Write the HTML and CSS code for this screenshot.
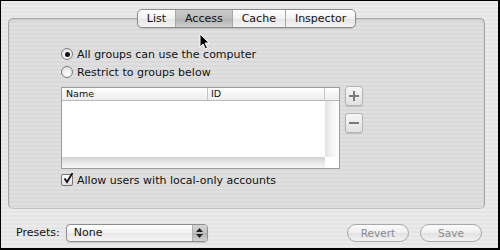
FILE: index.html
```html
<!DOCTYPE html>
<html lang="en">
<head>
    <meta charset="UTF-8">
    <title>Access</title>
    <link rel="stylesheet" href="styles.css">
</head>
<body>
    <div class="window">
        <div class="pane">
            <div class="tabs">
                <span class="tab">List</span>
                <span class="tab is-selected">Access</span>
                <span class="tab">Cache</span>
                <span class="tab">Inspector</span>
            </div>
            <div class="group">
                <label class="option"><span class="radio is-on"></span>All groups can use the computer</label>
                <label class="option"><span class="radio"></span>Restrict to groups below</label>
                <div class="list-row">
                    <div class="table">
                        <div class="table-head">
                            <span class="col-name">Name</span>
                            <span class="col-id">ID</span>
                            <span class="col-corner"></span>
                        </div>
                        <div class="table-body">
                            <div class="rows"></div>
                            <div class="vscroll"></div>
                        </div>
                        <div class="table-foot">
                            <div class="hscroll"></div>
                            <div class="corner"></div>
                        </div>
                    </div>
                    <div class="list-buttons">
                        <button class="square-btn">
                            <svg width="10" height="10" viewBox="0 0 10 10"><path d="M5 0v10M0 5h10" stroke="#7a7a7a" stroke-width="2"/></svg>
                        </button>
                        <button class="square-btn">
                            <svg width="10" height="10" viewBox="0 0 10 10"><path d="M0 5h10" stroke="#7a7a7a" stroke-width="2"/></svg>
                        </button>
                    </div>
                </div>
                <label class="option check-option">
                    <span class="checkbox">
                        <svg width="12" height="12" viewBox="0 0 12 12"><path d="M2.5 5.5l2.5 3.5 5.5-9" fill="none" stroke="#111" stroke-width="1.8"/></svg>
                    </span>Allow users with local-only accounts
                </label>
            </div>
        </div>

        <div class="bottom-bar">
            <span class="presets-label">Presets:</span>
            <div class="popup">
                <span class="popup-value">None</span>
                <span class="popup-arrows">
                    <svg width="7" height="10" viewBox="0 0 7 10"><path d="M3.5 0L7 4H0z M0 6h7L3.5 10z" fill="#222"/></svg>
                </span>
            </div>
            <div class="spacer"></div>
            <button class="pill-btn">Revert</button>
            <button class="pill-btn">Save</button>
        </div>

        <svg class="cursor" width="12" height="17" viewBox="0 0 12 17">
            <path d="M1 1v13l3-3 2.5 5 2-1-2.5-5h4.2z" fill="#000" stroke="#fff" stroke-width="1"/>
        </svg>
    </div>
</body>
</html>
```

FILE: styles.css
```css
/* Base */
* {
    margin: 0;
    padding: 0;
    box-sizing: border-box;
}

body {
    background: #000;
    font-family: 'DejaVu Sans', sans-serif;
    font-size: 11px;
    color: #111;
    width: 500px;
    height: 250px;
    overflow: hidden;
}

/* Window with aqua pinstripes */
.window {
    position: relative;
    margin: 1px 2px 2px 1px;
    width: 497px;
    height: 247px;
    padding: 8px 13px 0 7px;
    background: repeating-linear-gradient(to bottom, #ebebeb 0, #ebebeb 2px, #e4e4e4 2px, #e4e4e4 4px);
}

.pane {
    display: flex;
    flex-direction: column;
    align-items: center;
}

/* Segmented tabs */
.tabs {
    position: relative;
    z-index: 1;
    display: flex;
    height: 19px;
    margin-bottom: -10px;
    border: 1px solid #8c8c8c;
    border-radius: 5px;
    background: linear-gradient(to bottom, #ffffff, #f1f1f1 50%, #e4e4e4 51%, #f4f4f4);
    box-shadow: 0 1px 1px rgba(0, 0, 0, 0.15);
    overflow: hidden;
}

.tab {
    display: flex;
    align-items: center;
    padding: 0 9px;
    border-left: 1px solid #a8a8a8;
    line-height: 1;
}

.tab:first-child {
    border-left: none;
}

.tab.is-selected {
    background: linear-gradient(to bottom, #c9c9c9, #bdbdbd 50%, #aeaeae 51%, #cfcfcf);
}

/* Group box */
.group {
    width: 477px;
    height: 191px;
    border: 1px solid #a6a6a6;
    border-bottom-color: #c4c4c4;
    border-radius: 5px;
    padding: 26px 0 0 52px;
    background: repeating-linear-gradient(to bottom, #e0e0e0 0, #e0e0e0 2px, #d9d9d9 2px, #d9d9d9 4px);
    box-shadow: inset 0 1px 2px rgba(0, 0, 0, 0.12);
}

.option {
    display: flex;
    align-items: center;
    height: 18px;
    gap: 4px;
}

.radio {
    width: 12px;
    height: 12px;
    border-radius: 50%;
    border: 1px solid #7e7e7e;
    background: radial-gradient(circle at 50% 70%, #ffffff, #e6e6e6 70%, #cfcfcf);
    display: flex;
    align-items: center;
    justify-content: center;
}

.radio.is-on::after {
    content: "";
    width: 5px;
    height: 5px;
    border-radius: 50%;
    background: #111;
}

.checkbox {
    width: 12px;
    height: 12px;
    border: 1px solid #777;
    border-radius: 2px;
    background: linear-gradient(to bottom, #ffffff, #e0e0e0);
    display: flex;
    align-items: center;
    justify-content: center;
}

.checkbox svg {
    flex: none;
    margin-top: -2px;
    margin-left: 1px;
}

.check-option {
    margin-top: 2px;
}

/* Table */
.list-row {
    display: flex;
    gap: 5px;
    margin-top: 6px;
}

.table {
    width: 279px;
    height: 82px;
    border: 1px solid #9c9c9c;
    background: #fff;
    display: flex;
    flex-direction: column;
}

.table-head {
    display: flex;
    height: 13px;
    border-bottom: 1px solid #b8b8b8;
    background: linear-gradient(to bottom, #ffffff, #ececec);
    font-size: 9.5px;
    line-height: 12px;
}

.col-name {
    width: 146px;
    padding-left: 4px;
    border-right: 1px solid #c4c4c4;
}

.col-id {
    flex: 1;
    padding-left: 3px;
    border-right: 1px solid #c4c4c4;
}

.col-corner {
    width: 14px;
}

.table-body {
    flex: 1;
    display: flex;
}

.rows {
    flex: 1;
}

.vscroll {
    width: 14px;
    background: linear-gradient(to right, #e2e2e2, #f4f4f4 50%, #ffffff);
}

.table-foot {
    display: flex;
    height: 11px;
}

.hscroll {
    flex: 1;
    background: linear-gradient(to bottom, #d2d2d2, #ececec 60%, #f6f6f6);
}

.corner {
    width: 14px;
    background: #fff;
}

.list-buttons {
    display: flex;
    flex-direction: column;
    gap: 7px;
    margin-top: -1px;
}

.square-btn {
    width: 18px;
    height: 20px;
    border: 1px solid #b4b4b4;
    border-radius: 3px;
    background: linear-gradient(to bottom, #f6f6f6, #e2e2e2);
    box-shadow: 0 1px 1px rgba(0, 0, 0, 0.12);
    display: flex;
    align-items: center;
    justify-content: center;
}

/* Bottom bar */
.bottom-bar {
    display: flex;
    align-items: center;
    height: 44px;
    padding: 3px 3px 0 8px;
}

.presets-label {
    margin-right: 6px;
}

.popup {
    display: flex;
    width: 142px;
    height: 18px;
    border: 1px solid #8e8e8e;
    border-radius: 4px;
    background: linear-gradient(to bottom, #ffffff, #f2f2f2 50%, #e6e6e6 51%, #f6f6f6);
    box-shadow: 0 1px 1px rgba(0, 0, 0, 0.15);
    overflow: hidden;
}

.popup-value {
    flex: 1;
    padding-left: 7px;
    line-height: 16px;
}

.popup-arrows {
    width: 15px;
    display: flex;
    align-items: center;
    justify-content: center;
    border-left: 1px solid #b0b0b0;
    background: linear-gradient(to bottom, #d4d4d4, #c2c2c2 50%, #b2b2b2 51%, #d2d2d2);
}

.spacer {
    flex: 1;
}

.pill-btn {
    height: 18px;
    margin-left: 11px;
    border: 1px solid #a8a8a8;
    border-radius: 9px;
    background: linear-gradient(to bottom, #fbfbfb, #eeeeee 50%, #e2e2e2 51%, #f2f2f2);
    font-family: 'DejaVu Sans', sans-serif;
    font-size: 10.5px;
    color: #8a8a8a;
    width: 62px;
}

/* Pointer */
.cursor {
    position: absolute;
    left: 198px;
    top: 32px;
}
```
